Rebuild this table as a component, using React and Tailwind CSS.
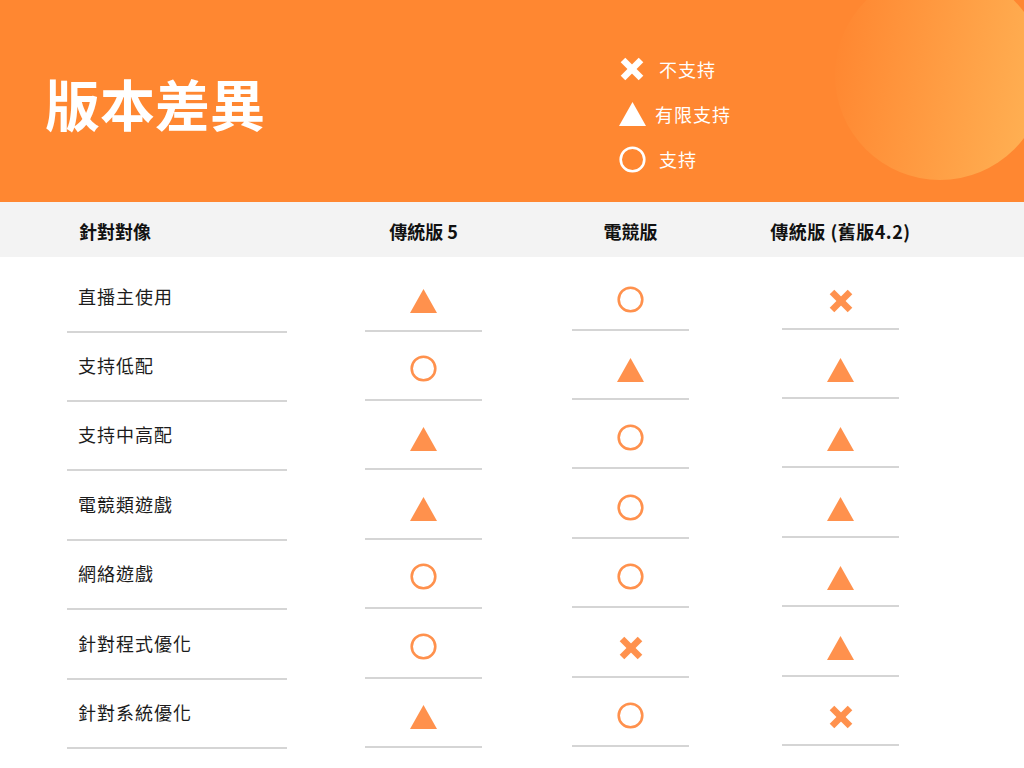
import React from "react";

const ORANGE = "#ff914d";

function XIcon({ color = ORANGE, size = 24 }) {
  return (
    <svg width={size} height={size} viewBox="0 0 24 24">
      <line x1="3" y1="3" x2="21" y2="21" stroke={color} strokeWidth="6.5" strokeLinecap="butt" />
      <line x1="21" y1="3" x2="3" y2="21" stroke={color} strokeWidth="6.5" strokeLinecap="butt" />
    </svg>
  );
}

function Tri({ color = ORANGE }) {
  return (
    <svg width="27" height="24" viewBox="0 0 27 24">
      <polygon points="13.5,0 27,24 0,24" fill={color} />
    </svg>
  );
}

function Ring({ color = ORANGE }) {
  return (
    <svg width="27" height="27" viewBox="0 0 27 27">
      <circle cx="13.5" cy="13.5" r="11.8" fill="none" stroke={color} strokeWidth="2.6" />
    </svg>
  );
}

function Mark({ t }) {
  if (t === "x") return <XIcon />;
  if (t === "t") return <Tri />;
  return <Ring />;
}

const rows = [
  { label: "直播主使用", v: ["t", "o", "x"], h: "h-[76px]" },
  { label: "支持低配", v: ["o", "t", "t"], h: "h-[69px]" },
  { label: "支持中高配", v: ["t", "o", "t"], h: "h-[69px]" },
  { label: "電競類遊戲", v: ["t", "o", "t"], h: "h-[70px]" },
  { label: "網絡遊戲", v: ["o", "o", "t"], h: "h-[69px]" },
  { label: "針對程式優化", v: ["o", "x", "t"], h: "h-[70px]" },
  { label: "針對系統優化", v: ["t", "o", "x"], h: "h-[69px]" },
];

export default function App() {
  return (
    <div className="w-[1024px] h-[768px] bg-white overflow-hidden font-['Noto_Sans_CJK_TC','Noto_Sans_CJK_SC',sans-serif] text-[#1c1c1c]">
      {/* Header */}
      <header className="relative h-[202px] bg-[#ff8731] overflow-hidden grid grid-cols-[618px_1fr]">
        <div
          aria-hidden
          className="absolute left-[835px] top-[-30px] w-[210px] h-[210px] rounded-full bg-[linear-gradient(100deg,#ff8731_5%,#ffb456_100%)]"
        />
        <div className="relative pl-[45px] pt-[70px]">
          <h1 className="text-[55px] leading-[64px] font-bold text-white">版本差異</h1>
        </div>
        <div className="relative pt-[56px] flex flex-col gap-[19px] text-white text-[18px] tracking-[1px]">
          <div className="flex items-center h-[26px]">
            <div className="w-[28px] flex justify-center"><XIcon color="#ffffff" size={24} /></div>
            <span className="ml-[13px] leading-[24px]">不支持</span>
          </div>
          <div className="flex items-center h-[26px]">
            <div className="w-[28px] flex justify-center"><Tri color="#ffffff" /></div>
            <span className="ml-[9px] leading-[24px]">有限支持</span>
          </div>
          <div className="flex items-center h-[26px]">
            <div className="w-[28px] flex justify-center"><Ring color="#ffffff" /></div>
            <span className="ml-[13px] leading-[24px]">支持</span>
          </div>
        </div>
      </header>

      {/* Table header */}
      <div className="h-[55px] bg-[#f3f3f3] flex items-center pl-[67px] pt-[3px] text-[18px] font-bold text-[#111]">
        <div className="w-[220px] pl-[12px]">針對對像</div>
        <div className="ml-[78px] w-[117px] text-center whitespace-nowrap">傳統版 5</div>
        <div className="ml-[90px] w-[117px] text-center">電競版</div>
        <div className="ml-[93px] w-[117px] flex justify-center whitespace-nowrap">
          <span className="tracking-[0.5px]">傳統版 (舊版4.2)</span>
        </div>
      </div>

      {/* Rows */}
      <div className="flex flex-col">
        {rows.map((r) => (
          <div key={r.label} className={`flex pl-[67px] ${r.h}`}>
            <div className="w-[220px] flex flex-col justify-end border-b-2 border-[#d5d5d5] pb-[23px] pl-[11px]">
              <span className="text-[18px] leading-[24px] tracking-[1px]">{r.label}</span>
            </div>
            <div className="ml-[78px] w-[117px] mb-[1px] flex items-end justify-center border-b-2 border-[#d5d5d5] pb-[17px]">
              <Mark t={r.v[0]} />
            </div>
            <div className="ml-[90px] w-[117px] mb-[2px] flex items-end justify-center border-b-2 border-[#d5d5d5] pb-[16px]">
              <Mark t={r.v[1]} />
            </div>
            <div className="ml-[93px] w-[117px] mb-[3px] flex items-end justify-center border-b-2 border-[#d5d5d5] pb-[15px]">
              <Mark t={r.v[2]} />
            </div>
          </div>
        ))}
      </div>
    </div>
  );
}
